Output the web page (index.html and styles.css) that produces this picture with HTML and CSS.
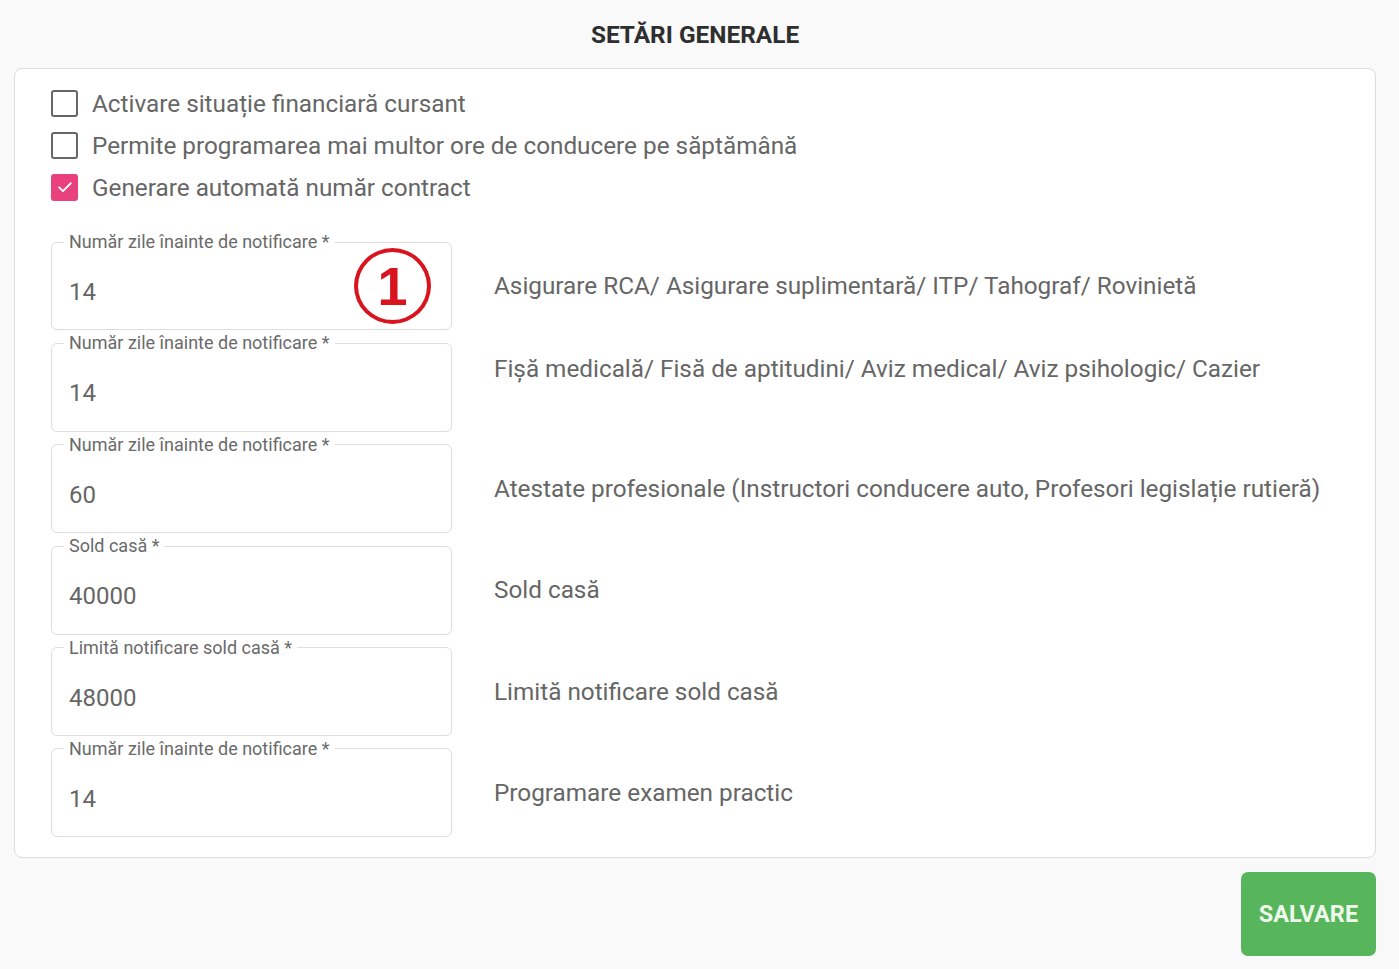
FILE: index.html
```html
<!DOCTYPE html>
<html lang="ro">
<head>
    <meta charset="UTF-8">
    <meta name="viewport" content="width=device-width, initial-scale=1.0">
    <title>Setări generale</title>
    <link rel="stylesheet" href="styles.css">
</head>
<body>
    <div class="page">
        <h1 class="title">SETĂRI GENERALE</h1>

        <div class="card">
            <div class="checks">
                <label class="check">
                    <span class="box"></span>
                    <span class="check-text">Activare situație financiară cursant</span>
                </label>
                <label class="check">
                    <span class="box"></span>
                    <span class="check-text">Permite programarea mai multor ore de conducere pe săptămână</span>
                </label>
                <label class="check">
                    <span class="box checked">
                        <svg viewBox="0 0 24 24" width="20" height="20"><path d="M5 12.5l4.5 4.5L19 7.5" fill="none" stroke="#fff" stroke-width="2.2" stroke-linecap="round" stroke-linejoin="round"/></svg>
                    </span>
                    <span class="check-text">Generare automată număr contract</span>
                </label>
            </div>

            <div class="fields">
                <div class="row">
                    <fieldset class="field">
                        <legend>Număr zile înainte de notificare *</legend>
                        <input type="text" value="14">
                        <span class="marker">1</span>
                    </fieldset>
                    <div class="description">Asigurare RCA/ Asigurare suplimentară/ ITP/ Tahograf/ Rovinietă</div>
                </div>
                <div class="row">
                    <fieldset class="field">
                        <legend>Număr zile înainte de notificare *</legend>
                        <input type="text" value="14">
                    </fieldset>
                    <div class="description raised">Fișă medicală/ Fisă de aptitudini/ Aviz medical/ Aviz psihologic/ Cazier</div>
                </div>
                <div class="row">
                    <fieldset class="field">
                        <legend>Număr zile înainte de notificare *</legend>
                        <input type="text" value="60">
                    </fieldset>
                    <div class="description">Atestate profesionale (Instructori conducere auto, Profesori legislație rutieră)</div>
                </div>
                <div class="row">
                    <fieldset class="field">
                        <legend>Sold casă *</legend>
                        <input type="text" value="40000">
                    </fieldset>
                    <div class="description">Sold casă</div>
                </div>
                <div class="row">
                    <fieldset class="field">
                        <legend>Limită notificare sold casă *</legend>
                        <input type="text" value="48000">
                    </fieldset>
                    <div class="description">Limită notificare sold casă</div>
                </div>
                <div class="row">
                    <fieldset class="field">
                        <legend>Număr zile înainte de notificare *</legend>
                        <input type="text" value="14">
                    </fieldset>
                    <div class="description">Programare examen practic</div>
                </div>
            </div>
        </div>

        <div class="actions">
            <button class="save-button">SALVARE</button>
        </div>
    </div>
</body>
</html>
```

FILE: styles.css
```css
* {
    font-family: Roboto, "Noto Sans", sans-serif;
    padding: 0;
    margin: 0;
    box-sizing: border-box;
}
body {
    background-color: #F9F9F9;
}
.page {
    padding: 0 23px 0 14px;
}
.title {
    height: 68px;
    line-height: 70px;
    text-align: center;
    font-size: 24.4px;
    font-weight: 700;
    color: #2E2E2E;
}
.card {
    background-color: #FFF;
    border: 1px solid #DCDCDC;
    border-radius: 8px;
    padding: 13px 36px 20px 36px;
}
.checks {
    display: flex;
    flex-direction: column;
    margin-bottom: 25px;
}
.check {
    display: flex;
    align-items: center;
    height: 42px;
    gap: 14px;
}
.check .box {
    width: 27px;
    height: 27px;
    border: 2.5px solid #666;
    border-radius: 3px;
    display: flex;
    align-items: center;
    justify-content: center;
}
.check .box.checked {
    background-color: #E8417D;
    border-color: #E8417D;
}
.check-text {
    font-size: 24.3px;
    color: #666;
}
.fields {
    display: flex;
    flex-direction: column;
    gap: 4px;
}
.row {
    display: grid;
    grid-template-columns: 401px 1fr;
    column-gap: 42px;
    align-items: center;
}
.field {
    position: relative;
    height: 97.4px;
    border: 1px solid #DDD;
    border-radius: 6px;
    padding: 0 12px;
}
.field legend {
    font-size: 18px;
    line-height: 18px;
    color: #6A6A6A;
    padding: 0 5px;
}
.field input {
    display: block;
    width: 100%;
    height: 78px;
    padding: 4px 5px 0;
    border: none;
    outline: none;
    background: transparent;
    font-size: 24px;
    color: #666;
}
.marker {
    position: absolute;
    left: 302px;
    top: -3px;
    width: 77px;
    height: 76px;
    border: 4px solid #D9141E;
    border-radius: 50%;
    color: #D9141E;
    font-size: 54px;
    font-weight: 700;
    line-height: 68px;
    text-align: center;
    font-family: "Liberation Sans", Arial, sans-serif;
}
.description {
    font-size: 24.3px;
    color: #666;
    padding-top: 8px;
}
.description.raised {
    margin-bottom: 38px;
}
.actions {
    display: flex;
    justify-content: flex-end;
    padding-top: 14px;
}
.save-button {
    width: 135px;
    height: 84px;
    background-color: #57B55B;
    border: none;
    border-radius: 7px;
    color: #EEF9EC;
    font-size: 23.5px;
    font-weight: 700;
    cursor: pointer;
}
```
